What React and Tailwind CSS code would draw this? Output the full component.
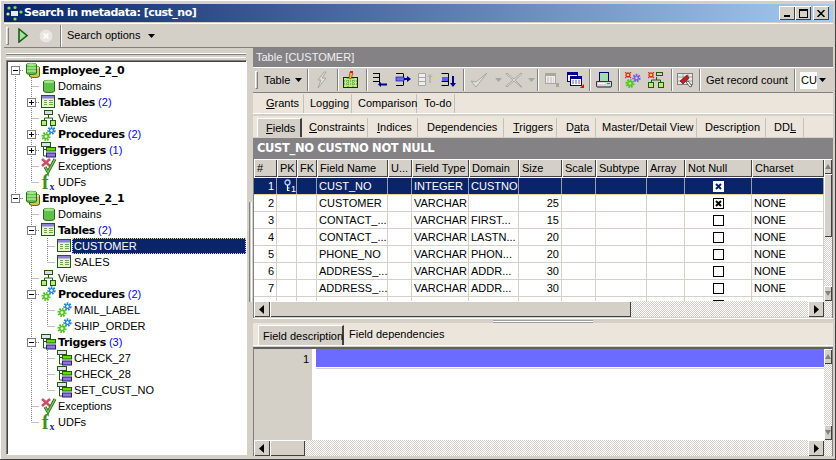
import React from "react";

const FONT = "font-['Liberation_Sans',sans-serif]";
const BOLD = "font-['DejaVu_Sans',sans-serif] font-bold";
const DITHER = "bg-[repeating-conic-gradient(#ffffff_0_25%,#d4d0c8_0_50%)] bg-[length:2px_2px]";
const BEVEL = "bg-[#d4d0c8] shadow-[inset_1px_1px_0_#ffffff,inset_-1px_-1px_0_#404040]";

/* ---------- tree icons ---------- */
const S = ({ w = 16, h = 16, children, className = "" }) => (
  <svg width={w} height={h} viewBox={`0 0 ${w} ${h}`} className={`shrink-0 block ${className}`}>{children}</svg>
);
const Cyl = ({ x = 0, y = 0, fill = "#5fc04a", top = "#a6e58e", w = 11, h = 13 }) => (
  <g transform={`translate(${x} ${y})`}>
    <path d={`M.5 2.5C.5 1 ${w - 0.5} 1 ${w - 0.5} 2.5V${h - 2}C${w - 0.5} ${h} .5 ${h} .5 ${h - 2}Z`} fill={fill} stroke="#2b6a1a" />
    <ellipse cx={w / 2} cy="2.7" rx={w / 2 - 1} ry="1.4" fill={top} />
  </g>
);
const DbIcon = () => (
  <S>
    <Cyl x={4} y={3} fill="#e2c34a" top="#f5e59a" />
    <Cyl x={1} y={0} />
    <path d="M2 6h9M2 9h9" stroke="#d9f5c9" />
  </S>
);
const DomIcon = () => <S><Cyl x={2} y={1} w={12} h={14} /></S>;
const TableIcon = () => (
  <S>
    <rect x=".5" y="1.5" width="13" height="12" fill="#e9f3cf" stroke="#1f5a10" />
    <rect x="1" y="2" width="12" height="2.5" fill="#8d7fd6" />
    <path d="M3 6.5h3M3 8.5h3M3 10.5h3M8 6.5h4M8 8.5h4M8 10.5h4" stroke="#6fa84a" />
  </S>
);
const ViewIcon = () => (
  <S>
    <rect x="3.5" y=".5" width="8" height="4" fill="#dcd6f5" stroke="#1f5a10" />
    <path d="M7.5 5v3M3.5 10V8h8v2" fill="none" stroke="#1f5a10" />
    <rect x=".5" y="10.5" width="5" height="5" fill="#b6ec7e" stroke="#1f5a10" />
    <rect x="9.5" y="10.5" width="5" height="5" fill="#b6ec7e" stroke="#1f5a10" />
  </S>
);
const Gear = ({ cx, cy, r, c, hole = "#fff" }) => (
  <g>
    <circle cx={cx} cy={cy} r={r} fill="none" stroke={c} strokeWidth="2.4" strokeDasharray="1.6 1" />
    <circle cx={cx} cy={cy} r={r - 0.4} fill={c} />
    <circle cx={cx} cy={cy} r={r * 0.4} fill={hole} />
  </g>
);
const ProcIcon = () => (
  <S>
    <Gear cx={10.5} cy={4.5} r={3} c="#2b86c8" />
    <Gear cx={5} cy={10.5} r={3.4} c="#4fc81e" />
  </S>
);
const TrigIcon = () => (
  <S>
    <rect x=".5" y=".5" width="9" height="4" fill="#e3def8" stroke="#1f5a10" />
    <path d="M2.5 5v9h3M2.5 7.5h3" fill="none" stroke="#1f5a10" />
    <rect x="5.5" y="5.5" width="9" height="3.5" fill="#5fdc14" stroke="#1f5a10" />
    <rect x="5.5" y="11" width="9" height="4" fill="#8a7ad8" stroke="#2a1a70" />
  </S>
);
const ExcIcon = () => (
  <S>
    <path d="M1 1l8 7M9 1L1 8" stroke="#c8506a" strokeWidth="2.6" />
    <path d="M4 9l3 5 7-13" fill="none" stroke="#1f6a10" strokeWidth="3" />
    <path d="M4 9l3 5 7-13" fill="none" stroke="#7cc850" strokeWidth="1.4" />
  </S>
);
const UdfIcon = () => (
  <S className="overflow-visible">
    <text x="1" y="14.5" fontSize="20" fontWeight="700" fontFamily="'Liberation Serif',serif" fill="#3f8f1f">f</text>
    <text x="8.5" y="15.5" fontSize="10" fontWeight="700" fontFamily="'Liberation Serif',serif" fill="#2a2a90">x</text>
  </S>
);

const ICONS = { db: DbIcon, dom: DomIcon, table: TableIcon, view: ViewIcon, proc: ProcIcon, trig: TrigIcon, exc: ExcIcon, udf: UdfIcon };

/* ---------- tree connector ---------- */
const Conn = ({ k }) => {
  const dot = { stroke: "#808080", strokeDasharray: "1 1", fill: "none" };
  return (
    <S>
      {(k === "v" || k === "t" || k === "+t" || k === "-t") && <path d="M8.5 0V16" {...dot} />}
      {(k === "l" || k === "t" || k === "-l") && <path d="M8.5 0V8M8.5 8.5H16" {...dot} />}
      {(k === "+" || k === "-" || k === "+t" || k === "-t" || k === "-r" || k === "-l") && <path d="M13 8.5H16" {...dot} />}
      {k === "-r" && <path d="M8.5 12V16" {...dot} />}
      {(k === "+" || k === "-" || k === "+t" || k === "-t" || k === "-r" || k === "-l") && (
        <>
          <rect x="4.5" y="4.5" width="8" height="8" fill="#fff" stroke="#808080" />
          <path d="M6 8.5h5" stroke="#000" />
          {(k === "+" || k === "+t") && <path d="M8.5 6v5" stroke="#000" />}
        </>
      )}
    </S>
  );
};

const TREE = [
  { c: ["-r"], i: "db", t: "Employee_2_0", b: 1 },
  { c: ["v", "t"], i: "dom", t: "Domains" },
  { c: ["v", "+t"], i: "table", t: "Tables", b: 1, n: 2 },
  { c: ["v", "t"], i: "view", t: "Views" },
  { c: ["v", "+t"], i: "proc", t: "Procedures", b: 1, n: 2 },
  { c: ["v", "+t"], i: "trig", t: "Triggers", b: 1, n: 1 },
  { c: ["v", "t"], i: "exc", t: "Exceptions" },
  { c: ["v", "l"], i: "udf", t: "UDFs" },
  { c: ["-l"], i: "db", t: "Employee_2_1", b: 1 },
  { c: ["", "t"], i: "dom", t: "Domains" },
  { c: ["", "-t"], i: "table", t: "Tables", b: 1, n: 2 },
  { c: ["", "v", "t"], i: "table", t: "CUSTOMER", sel: 1 },
  { c: ["", "v", "l"], i: "table", t: "SALES" },
  { c: ["", "t"], i: "view", t: "Views" },
  { c: ["", "-t"], i: "proc", t: "Procedures", b: 1, n: 2 },
  { c: ["", "v", "t"], i: "proc", t: "MAIL_LABEL" },
  { c: ["", "v", "l"], i: "proc", t: "SHIP_ORDER" },
  { c: ["", "-t"], i: "trig", t: "Triggers", b: 1, n: 3 },
  { c: ["", "v", "t"], i: "trig", t: "CHECK_27" },
  { c: ["", "v", "t"], i: "trig", t: "CHECK_28" },
  { c: ["", "v", "l"], i: "trig", t: "SET_CUST_NO" },
  { c: ["", "t"], i: "exc", t: "Exceptions" },
  { c: ["", "l"], i: "udf", t: "UDFs" },
];

const TreeRow = ({ r }) => {
  const I = ICONS[r.i];
  return (
    <div className="flex items-center h-4 whitespace-nowrap">
      {r.c.map((k, i) => <Conn key={i} k={k} />)}
      <span className="ml-[2px] w-[15px] shrink-0"><I /></span>
      {r.sel ? (
        <span className="grow h-4 leading-[14px] pl-[1px] bg-[#0a246a] text-white border border-dotted border-[#e8d088]">{r.t}</span>
      ) : (
        <span className="ml-[2px] leading-4">
          {r.b ? <b className={`${BOLD} text-[11px] tracking-[-0.35px]`}>{r.t}</b> : r.t}
          {r.n ? <span className="text-[#0000ff]"> ({r.n})</span> : null}
        </span>
      )}
    </div>
  );
};

/* ---------- small bits ---------- */
const Caret = ({ c = "#000", className = "" }) => (
  <S w={7} h={4} className={className}><path d="M0 0h7L3.5 4z" fill={c} /></S>
);
const Grip = () => <div className="w-[3px] h-[18px] mx-[2px] shrink-0 bg-[#d4d0c8] border border-t-white border-l-white border-r-[#808080] border-b-[#808080]" />;
const Sep = ({ className = "" }) => <div className={`w-[2px] h-[22px] shrink-0 border-l border-l-[#808080] border-r border-r-white ${className}`} />;

const Arrow = ({ d }) => (
  <S w={6} h={9}>
    {d === "l" && <path d="M5 0v9L0 4.5z" fill="#000" />}
    {d === "r" && <path d="M1 0v9l5-4.5z" fill="#000" />}
  </S>
);
const ScrollBtn = ({ d, className = "" }) => (
  <div className={`${BEVEL} w-4 h-4 shrink-0 flex items-center justify-center ${className}`}><Arrow d={d} /></div>
);
const VBtn = ({ up, className = "" }) => (
  <div className={`${BEVEL} w-2 h-[15px] shrink-0 flex items-center justify-center overflow-hidden ${className}`}>
    <S w={6} h={5}><path d={up ? "M3 0l3 5H0z" : "M0 0h6L3 5z"} fill="#808080" /></S>
  </div>
);

/* ---------- toolbar icons ---------- */
const Lightning = () => <S w={14} h={18}><path d="M9 1L3 9h3l-3 8 8-10H7l4-6z" fill="#e4e2dc" stroke="#a8a6a0" /></S>;
const NewTable = () => (
  <S w={16} h={18}>
    <rect x=".5" y="6.5" width="14" height="10" fill="#b8ec80" stroke="#222" />
    <path d="M1 10h13M1 13h13M5 7v9M10 7v9" stroke="#4a8a30" strokeDasharray="1 1" />
    <path d="M7 1l3 1-2 6-2-1z" fill="#e8c020" stroke="#802020" strokeWidth=".6" />
    <rect x="7" y="0" width="3" height="2" fill="#d02020" />
  </S>
);
const ColLeft = () => (
  <S w={16} h={16}>
    <path d="M1 1.5h7M7.5 1.5v10M1 5.5h7M1 9.5h7" fill="none" stroke="#000" />
    <path d="M6 12.5l3-2.5v1.5h6v2H9V15z" fill="#000090" />
  </S>
);
const ColRight = () => (
  <S w={16} h={16}>
    <path d="M1 1.5h7M8.5 1.5v12M1 13.5h7" fill="none" stroke="#000" />
    <rect x="1" y="5" width="8" height="4" fill="#7070ff" stroke="#000090" strokeWidth=".6" />
    <path d="M9 6h3V4l4 3-4 3V8H9z" fill="#000090" />
  </S>
);
const ColUp = () => (
  <S w={16} h={16}>
    <path d="M.5 1.5h7v12h-7zM.5 5.5h7M.5 9.5h7" fill="#eee" stroke="#a8a6a0" />
    <path d="M12 2l3 3h-2v6h-2V5H9z" fill="#b8b6b0" />
  </S>
);
const ColDown = () => (
  <S w={16} h={16}>
    <path d="M.5 1.5h7M7.5 1.5v12M.5 13.5h7" fill="none" stroke="#000" />
    <rect x="1" y="5" width="6" height="4" fill="#6060f0" />
    <path d="M.5 9.5h7" stroke="#000" />
    <path d="M11 4h2v7h2l-3 4-3-4h2z" fill="#000090" />
  </S>
);
const Check = () => <S w={18} h={16}><path d="M1 9l5 6L17 1 6 10z" fill="#e4e2dc" stroke="#a8a6a0" /></S>;
const Cross = () => <S w={18} h={16}><path d="M2 1l7 6 7-6 1 1-7 6 7 7-1 0-7-6-7 6-1-1 7-6-7-6z" fill="#e4e2dc" stroke="#a8a6a0" /></S>;
const GridGray = () => (
  <S w={14} h={15}>
    <rect x=".5" y=".5" width="10" height="10" fill="#f0eeea" stroke="#a8a6a0" />
    <rect x="1" y="1" width="9" height="2" fill="#a8a6a0" />
    <path d="M2 5h7M2 7h7M2 9h7" stroke="#bbb" strokeDasharray="2 1" />
    <path d="M11 10h3v4h-3z" fill="#a8a6a0" />
  </S>
);
const GridColor = () => (
  <S w={17} h={16}>
    <rect x=".5" y=".5" width="10" height="9" fill="#fff" stroke="#000090" />
    <rect x="1" y="1" width="9" height="2" fill="#000090" />
    <rect x="3.5" y="4.5" width="11" height="9" fill="#fff" stroke="#000090" />
    <rect x="4" y="5" width="10" height="2" fill="#000090" />
    <path d="M5 9h8M5 11h8" stroke="#6060a0" strokeDasharray="2 1" />
    <path d="M17 12v4h-4z" fill="#f00000" />
  </S>
);
const Printer = () => (
  <S w={16} h={17}>
    <rect x="3.5" y=".5" width="9" height="9" fill="#a0e0a0" stroke="#000080" />
    <path d="M.5 9.5h15v5H.5z" fill="#d8d8d8" stroke="#333" />
    <path d="M2 11.5h7" stroke="#fff" />
    <rect x="11" y="11" width="3" height="1" fill="#e03080" />
    <rect x="1" y="14" width="14" height="2" fill="#777" />
  </S>
);
const Burst = ({ x, y }) => (
  <g transform={`translate(${x} ${y})`}>
    <path d="M0 0l6 6M6 0L0 6M3 0v6M0 3h6" stroke="#e02020" strokeWidth="1.1" />
    <rect x="2" y="2" width="2" height="2" fill="#f0e020" />
  </g>
);
const GearsNew = () => (
  <S w={16} h={16}>
    <Gear cx={11.5} cy={6} r={3} c="#7a60d8" hole="#d4d0c8" />
    <Gear cx={5} cy={11.5} r={3.4} c="#4fc81e" hole="#d4d0c8" />
    <Burst x={0} y={0} />
  </S>
);
const TreeNew = () => (
  <S w={16} h={16}>
    <rect x="8.5" y=".5" width="6" height="3" fill="none" stroke="#1f5a10" />
    <path d="M8.5 5v3M3.5 10V8h9v2" fill="none" stroke="#1f5a10" />
    <rect x=".5" y="10.5" width="5" height="5" fill="#b6ec7e" stroke="#1f5a10" />
    <rect x="10.5" y="10.5" width="5" height="5" fill="#b6ec7e" stroke="#1f5a10" />
    <Burst x={0} y={0} />
  </S>
);
const Eraser = () => (
  <S w={16} h={16}>
    <rect x=".5" y="1.5" width="15" height="11" fill="#e8e8e8" stroke="#808080" />
    <path d="M1 5h14M1 9h14M6 2v10M11 2v10" stroke="#a0a0a0" />
    <path d="M3 9l7-6 2 3-6 6z" fill="#c02020" stroke="#401010" strokeWidth=".6" />
    <path d="M9 10l4 5 2-1-4-5z" fill="#fff" stroke="#222" strokeWidth=".7" />
  </S>
);

/* ---------- grid ---------- */
const COLS = ["w-[23px]", "w-[20px]", "w-[20px]", "w-[71px]", "w-[24px]", "w-[57px]", "w-[50px]", "w-[43px]", "w-[34px]", "w-[51px]", "w-[38px]", "w-[67px]", "w-[72px]"];
const HEAD = ["#", "PK", "FK", "Field Name", "U...", "Field Type", "Domain", "Size", "Scale", "Subtype", "Array", "Not Null", "Charset"];
const ROWS = [
  ["1", "key", "", "CUST_NO", "", "INTEGER", "CUSTNO", "", "", "", "", "x", ""],
  ["2", "", "", "CUSTOMER", "", "VARCHAR", "", "25", "", "", "", "x", "NONE"],
  ["3", "", "", "CONTACT_...", "", "VARCHAR", "FIRST...", "15", "", "", "", "o", "NONE"],
  ["4", "", "", "CONTACT_...", "", "VARCHAR", "LASTN...", "20", "", "", "", "o", "NONE"],
  ["5", "", "", "PHONE_NO", "", "VARCHAR", "PHON...", "20", "", "", "", "o", "NONE"],
  ["6", "", "", "ADDRESS_...", "", "VARCHAR", "ADDR...", "30", "", "", "", "o", "NONE"],
  ["7", "", "", "ADDRESS_...", "", "VARCHAR", "ADDR...", "30", "", "", "", "o", "NONE"],
  ["8", "", "", "CITY", "", "VARCHAR", "", "25", "", "", "", "o", "NONE"],
];

const Box = ({ on, sel }) => (
  <S w={11} h={11}>
    <rect x=".5" y=".5" width="10" height="10" fill="#fff" stroke={sel ? "#fff" : "#000"} />
    {on && <path d="M3 3l5 5M8 3l-5 5" stroke={sel ? "#0a246a" : "#000"} strokeWidth="2" />}
  </S>
);
const KeyIcon = () => (
  <span className="flex items-start pl-[5px]">
    <S w={7} h={13}>
      <circle cx="3.5" cy="3.5" r="2.5" fill="none" stroke="#a8c8ff" strokeWidth="1.4" />
      <path d="M3.5 6v6M3.5 9h2M3.5 11.5h2" stroke="#fff" strokeWidth="1.2" />
    </S>
    <span className="text-[9px] leading-[9px] mt-[6px]">1</span>
  </span>
);

const Row = ({ r, sel }) => (
  <div className={`flex h-[17px] shrink-0 border-b ${sel ? "bg-[#0a246a] text-white border-b-[#e8d4a0]" : "bg-white border-b-[#d4d0c8]"}`}>
    {r.map((v, i) => (
      <div
        key={i}
        className={`${COLS[i]} shrink-0 h-full flex items-center whitespace-nowrap overflow-hidden ${sel ? "border-r border-r-[#d4d0c8]/70" : "border-r border-r-[#d4d0c8]"} ${i === 0 || i === 7 ? "justify-end pr-[2px]" : i === 11 ? "justify-center" : "pl-[2px]"}`}
      >
        {i === 11 && v ? <Box on={v === "x"} sel={sel} /> : v === "key" ? <KeyIcon /> : v}
      </div>
    ))}
  </div>
);

const u = (s, idx) => <>{s.slice(0, idx)}<u>{s[idx]}</u>{s.slice(idx + 1)}</>;

const Tab = ({ className = "", children }) => (
  <div className={`h-[19px] leading-[19px] shrink-0 border-r border-r-[#c4c0b8] whitespace-nowrap ${className}`}>{children}</div>
);

export default function App() {
  return (
    <div className={`${FONT} text-[11px] text-black w-[836px] h-[460px] overflow-hidden bg-[#d4d0c8] flex flex-col shadow-[inset_-1px_-1px_0_#404040,inset_1px_1px_0_#ffffff]`}>
      <div className="flex flex-col grow min-h-0 pt-1 pl-1 pr-[3px]">
        {/* title bar */}
        <div className="h-[18px] shrink-0 flex items-center bg-[linear-gradient(90deg,#0a246a,#a6caf0)] text-white">
          <S w={18} h={16} className="ml-[2px]">
            <circle cx="3" cy="3" r="1.6" fill="#7de050" />
            <circle cx="9" cy="2.5" r="1.6" fill="#7de050" />
            <circle cx="2" cy="9" r="1.6" fill="#c8f0b0" />
            <rect x="5" y="6" width="7" height="5" fill="#e8e8f0" />
            <circle cx="15" cy="7" r="1.6" fill="#7de050" />
            <circle cx="9" cy="14" r="1.6" fill="#7de050" />
          </S>
          <span className={`${BOLD} text-[11px] tracking-[-0.5px] whitespace-nowrap`}>Search in metadata: [cust_no]</span>
          <div className="ml-auto mr-[4px] flex">
            <div className={`${BEVEL} w-4 h-[14px] flex items-end justify-center pb-[3px]`}><div className="w-[6px] h-[2px] bg-black" /></div>
            <div className={`${BEVEL} w-4 h-[14px] flex items-center justify-center`}><div className="w-[9px] h-[9px] border border-black border-t-2" /></div>
            <div className={`${BEVEL} w-4 h-[14px] ml-[2px] flex items-center justify-center`}>
              <S w={8} h={7}><path d="M.5 0l7 7M7.5 0l-7 7" stroke="#000" strokeWidth="1.5" /></S>
            </div>
          </div>
        </div>
        {/* main toolbar */}
        <div className="h-[25px] mt-px shrink-0 flex items-center border-t border-t-white border-b border-b-[#808080]">
          <Grip />
          <S w={10} h={15} className="ml-[7px]"><path d="M1 1l8 6.5L1 14z" fill="#a8e0a0" stroke="#186018" strokeWidth="1.6" /></S>
          <S w={16} h={16} className="ml-[10px]">
            <circle cx="8" cy="8" r="7" fill="#e8e6e0" stroke="#d0cec8" />
            <path d="M5.5 5.5l5 5M10.5 5.5l-5 5" stroke="#fff" strokeWidth="1.6" />
          </S>
          <Sep className="ml-[6px]" />
          <span className="ml-[5px] w-[71px] shrink-0 whitespace-nowrap">Search options</span>
          <Caret className="ml-[10px]" />
        </div>
        {/* body */}
        <div className="flex grow min-h-0">
          {/* left */}
          <div className="w-[243px] shrink-0 flex flex-col pl-[2px] pt-[5px]">
            <div className="h-[5px] mr-[1px] shrink-0 border-y border-y-white bg-[#d4d0c8] shadow-[inset_0_1px_0_#808080]" />
            <div className="mt-[2px] h-[395px] shrink-0 bg-white border border-t-[#808080] border-l-[#808080] border-r-white border-b-white shadow-[inset_1px_1px_0_#404040] pt-px overflow-hidden">
              {TREE.map((r, i) => <TreeRow key={i} r={r} />)}
            </div>
          </div>
          {/* splitter */}
          <div className="w-[6px] shrink-0 flex items-center justify-center">
            <div className="w-[3px] h-[100px] border-x border-x-white bg-[#d4d0c8] border-l-[#808080]" />
          </div>
          {/* right */}
          <div className="w-[580px] shrink-0 flex flex-col">
            <div className="h-[19px] shrink-0 bg-[#858285] text-[#f0f0f0] pl-[3px] leading-[19px] whitespace-nowrap">Table [CUSTOMER]</div>
            <div className="h-[26px] shrink-0 border-t border-t-white border-b border-b-[#808080] flex items-center overflow-hidden">
              <Grip />
              <span className="ml-[4px] w-[28px] shrink-0 whitespace-nowrap">Table</span>
              <Caret className="ml-[3px]" />
              <Sep className="ml-[5px]" />
              <span className="ml-[6px] w-[14px] shrink-0"><Lightning /></span>
              <Sep className="ml-[8px]" />
              <span className="ml-[4px] w-[16px] shrink-0"><NewTable /></span>
              <Sep className="ml-[7px]" />
              <span className="ml-[4px]"><ColLeft /></span>
              <span className="ml-[7px]"><ColRight /></span>
              <span className="ml-[7px]"><ColUp /></span>
              <span className="ml-[7px]"><ColDown /></span>
              <Sep className="ml-[6px]" />
              <span className="ml-[5px]"><Check /></span>
              <Caret c="#a8a6a0" className="ml-[7px]" />
              <span className="ml-[3px]"><Cross /></span>
              <Caret c="#a8a6a0" className="ml-[5px]" />
              <Sep className="ml-[2px]" />
              <span className="ml-[6px]"><GridGray /></span>
              <span className="ml-[8px]"><GridColor /></span>
              <Sep className="ml-[5px]" />
              <span className="ml-[5px]"><Printer /></span>
              <Sep className="ml-[6px]" />
              <span className="ml-[5px]"><GearsNew /></span>
              <span className="ml-[7px]"><TreeNew /></span>
              <Sep className="ml-[7px]" />
              <span className="ml-[4px]"><Eraser /></span>
              <Sep className="ml-[6px]" />
              <span className="ml-[5px] w-[83px] shrink-0 whitespace-nowrap">Get record count</span>
              <Sep className="ml-[5px]" />
              <div className="ml-[4px] w-[27px] h-[17px] shrink-0 bg-white flex items-center pl-[1px]">
                CU
                <div className="ml-auto w-[10px] h-full bg-[#d4d0c8] flex items-center justify-center"><Caret /></div>
              </div>
            </div>
            {/* tabs 1 */}
            <div className="h-[21px] shrink-0 bg-[#ece5dc] border-b border-b-white flex items-center pl-[13px]">
              <Tab className="w-[38px]">{u("Grants", 0)}</Tab>
              <Tab className="w-[48px] pl-[6px]">Logging</Tab>
              <Tab className="w-[65px] pl-[6px]">Comparison</Tab>
              <Tab className="w-[38px] pl-[7px]">To-do</Tab>
            </div>
            <div className="h-[2px] shrink-0" />
            {/* tabs 2 */}
            <div className="h-[21px] shrink-0 bg-[#ece5dc] flex items-end pl-[4px]">
              <div className="h-[19px] w-[45px] shrink-0 leading-[19px] pl-[8px] bg-[#d4d0c8] border-t border-l border-white border-r-2 border-r-[#404040]">{u("Fields", 0)}</div>
              <Tab className="w-[66px] pl-[7px]">{u("Constraints", 0)}</Tab>
              <Tab className="w-[50px] pl-[9px]">{u("Indices", 0)}</Tab>
              <Tab className="w-[86px] pl-[9px]">{u("Dependencies", 2)}</Tab>
              <Tab className="w-[53px] pl-[9px]">{u("Triggers", 0)}</Tab>
              <Tab className="w-[39px] pl-[9px]">{u("Data", 1)}</Tab>
              <Tab className="w-[101px] pl-[6px]">Master/Detail View</Tab>
              <Tab className="w-[69px] pl-[8px]">{u("Description", 7)}</Tab>
              <Tab className="w-[38px] pl-[8px]">{u("DDL", 2)}</Tab>
            </div>
            <div className="h-px shrink-0" />
            <div className={`h-5 shrink-0 bg-[#858285] text-white ${BOLD} text-[11.5px] tracking-[-0.35px] leading-5 pl-[4px] whitespace-nowrap`}>CUST_NO CUSTNO NOT NULL</div>
            {/* grid */}
            <div className="h-[160px] shrink-0 border-t border-l border-[#808080] border-r border-r-[#808080] flex flex-col">
              <div className="flex h-[142px] shrink-0">
                <div className="w-[570px] shrink-0 overflow-hidden flex flex-col">
                  <div className="flex h-[19px] shrink-0 border-b border-b-white">
                    {HEAD.map((h, i) => (
                      <div key={i} className={`${COLS[i]} ${BEVEL} shrink-0 h-full flex items-center pl-[3px] whitespace-nowrap overflow-hidden`}>{h}</div>
                    ))}
                  </div>
                  {ROWS.map((r, i) => <Row key={i} r={r} sel={i === 0} />)}
                </div>
                <div className={`w-2 shrink-0 flex flex-col ${DITHER}`}>
                  <VBtn up />
                  <div className={`${BEVEL} w-2 h-[63px] shrink-0`} />
                  <VBtn className="mt-auto" />
                </div>
              </div>
              <div className={`flex h-4 shrink-0 ${DITHER}`}>
                <ScrollBtn d="l" />
                <div className={`${BEVEL} w-[361px] h-4 shrink-0`} />
                <ScrollBtn d="r" className="ml-auto mr-2" />
              </div>
            </div>
            {/* splitter */}
            <div className="h-[5px] shrink-0 border-t border-t-white flex items-center justify-center">
              <div className="w-[100px] h-[3px] border-y border-y-[#a0a0a0] bg-white" />
            </div>
            {/* bottom tabs */}
            <div className="h-[23px] shrink-0 bg-[#ece5dc] border-b border-b-white flex items-end pl-[5px]">
              <div className="h-[20px] w-[86px] shrink-0 leading-[20px] pl-[4px] bg-[#d4d0c8] border-t border-l border-white border-r-2 border-r-[#404040] whitespace-nowrap">Field description</div>
              <Tab className="w-[100px] pl-[5px] border-r-0 h-[20px]">Field dependencies</Tab>
            </div>
            <div className="h-px shrink-0" />
            {/* editor */}
            <div className="grow min-h-0 border-t-2 border-t-[#606060] border-l border-l-[#808080] border-r border-r-[#808080] flex flex-col">
              <div className="flex grow min-h-0">
                <div className="w-[59px] shrink-0 bg-[#d4d0c8] text-right pr-[3px] leading-[20px] border-r border-r-white">1</div>
                <div className="grow bg-white pl-[3px]">
                  <div className="h-[18px] bg-[#6b6bff]" />
                  <div className="h-[2px] border-b border-b-[#d4d0c8]" />
                </div>
                <div className={`w-2 shrink-0 flex flex-col ${DITHER}`}>
                  <VBtn up />
                  <VBtn className="mt-auto" />
                </div>
              </div>
              <div className={`flex h-4 shrink-0 ${DITHER}`}>
                <ScrollBtn d="l" />
                <div className={`${BEVEL} w-[35px] h-4 shrink-0`} />
                <ScrollBtn d="r" className="ml-auto mr-2" />
              </div>
            </div>
          </div>
        </div>
        <div className="h-[4px] shrink-0" />
      </div>
    </div>
  );
}
